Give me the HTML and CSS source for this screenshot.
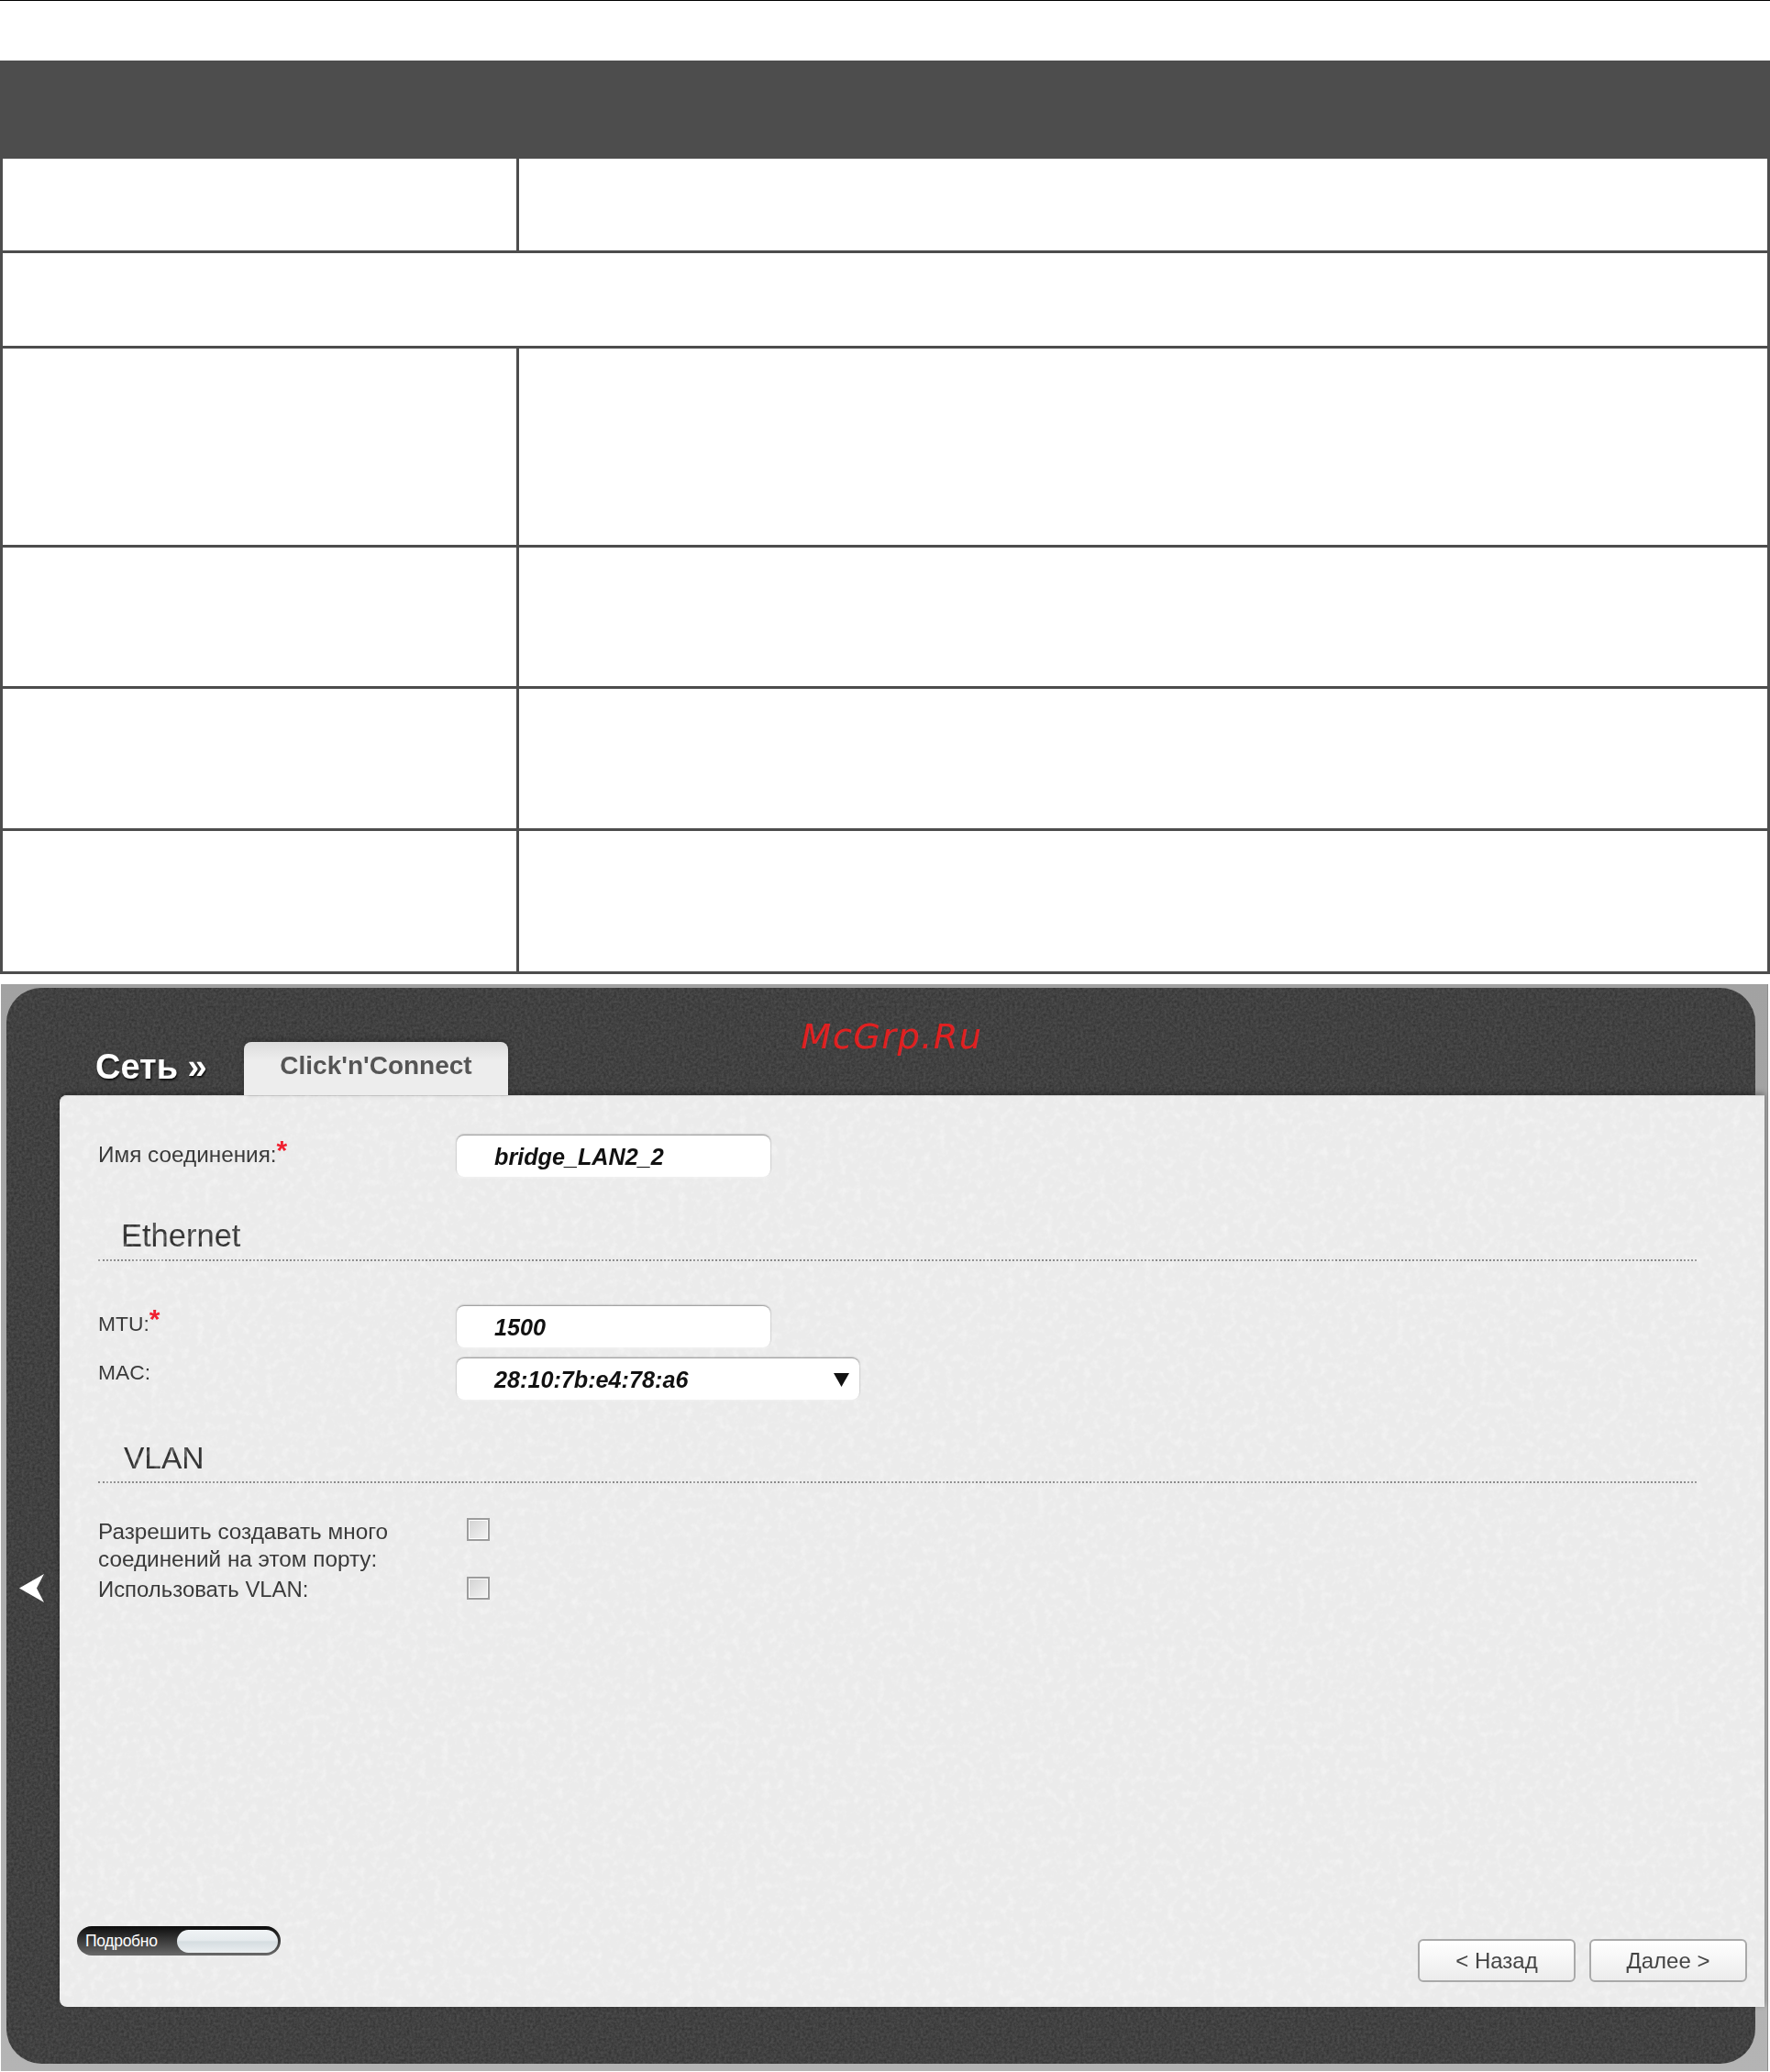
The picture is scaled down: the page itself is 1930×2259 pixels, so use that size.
FILE: index.html
```html
<!DOCTYPE html>
<html lang="ru">
<head>
<meta charset="utf-8">
<title>Click'n'Connect</title>
<link rel="stylesheet" href="styles.css">
</head>
<body>
<div class="topline"></div>
<div class="headband"></div>
<div class="grid">
  <div class="cell r1 c1"></div><div class="cell r1 c2"></div>
  <div class="cell r2 span"></div>
  <div class="cell r3 c1"></div><div class="cell r3 c2"></div>
  <div class="cell r4 c1"></div><div class="cell r4 c2"></div>
  <div class="cell r5 c1"></div><div class="cell r5 c2"></div>
  <div class="cell r6 c1"></div><div class="cell r6 c2"></div>
</div>
<div class="shot">
  <div class="frame">
    <svg class="noise" aria-hidden="true"><filter id="grain"><feTurbulence type="fractalNoise" baseFrequency="0.35" numOctaves="3" seed="4"/><feColorMatrix values="0 0 0 0 0  0 0 0 0 0  0 0 0 0 0  0.5 0 0 0 -0.12"/></filter><rect width="100%" height="100%" filter="url(#grain)"/></svg>
    <div class="brand">McGrp.Ru</div>
    <div class="tabs">
      <span class="crumb">Сеть »</span>
      <span class="tab">Click'n'Connect</span>
    </div>
    <div class="body">
      <button class="collapse" aria-label="Свернуть"><svg width="27" height="31" viewBox="0 0 27 31"><path class="chev" d="M0 15.500 27 0 19 15.500 27 31Z"/></svg></button>
      <div class="panel">
        <svg class="noise" aria-hidden="true"><filter id="paper"><feTurbulence type="fractalNoise" baseFrequency="0.12" numOctaves="3" seed="9"/><feColorMatrix values="0 0 0 0 1  0 0 0 0 1  0 0 0 0 1  0.9 0 0 0 -0.42"/></filter><rect width="100%" height="100%" filter="url(#paper)"/></svg>
        <div class="row first">
          <label class="lbl">Имя соединения:<sup class="req">*</sup></label>
          <div class="field w-text">bridge_LAN2_2</div>
        </div>
        <h2 class="sect eth">Ethernet</h2>
        <div class="row mtu">
          <label class="lbl latin">MTU:<sup class="req">*</sup></label>
          <div class="field w-text">1500</div>
        </div>
        <div class="row mac">
          <label class="lbl latin">MAC:</label>
          <div class="field w-select">28:10:7b:e4:78:a6<svg class="caret" width="17" height="15" viewBox="0 0 17 15"><path d="M0 0H17L8.500 15Z"/></svg></div>
        </div>
        <h2 class="sect vlan">VLAN</h2>
        <div class="row check one">
          <label class="lbl">Разрешить создавать много соединений на этом порту:</label>
          <span class="box"></span>
        </div>
        <div class="row check two">
          <label class="lbl">Использовать VLAN:</label>
          <span class="box"></span>
        </div>
        <div class="foot">
          <div class="toggle"><span class="toggle-text">Подробно</span><span class="knob"></span></div>
          <div class="btns"><button class="btn">&lt; Назад</button><button class="btn">Далее &gt;</button></div>
        </div>
      </div>
    </div>
  </div>
</div>
</body>
</html>
```

FILE: styles.css
```css
* { box-sizing: border-box; }
html, body { margin: 0; padding: 0; background: #fff; }
body { width: 1930px; height: 2259px; overflow: hidden; font-family: "Liberation Sans", Arial, sans-serif; }

.topline { height: 1px; background: #000; }
.headband { height: 107px; margin-top: 65px; background: #4d4d4d; }

.grid {
  display: grid;
  grid-template-columns: 566px 1364px;
  grid-template-rows: 103px 104px 217px 154px 155px 156px;
  height: 888px;
  background: #fff;
}
.cell { border-right: 3px solid #4d4d4d; border-bottom: 3px solid #4d4d4d; }
.c1 { border-left: 3px solid #4d4d4d; }
.span { grid-column: 1 / 3; border-left: 3px solid #4d4d4d; }

.shot {
  margin: 12px 2px 0 1px;
  height: 1185px;
  padding: 4px 13px 8px 6px;
  background: linear-gradient(#a2a2a2, #b4b4b4);
  border-right: 1px solid #8d8d8d;
  position: relative;
}
.frame {
  position: relative;
  height: 1173px;
  background: #4b4b4b;
  border-radius: 38px;
  filter: blur(0.55px);
  display: flex;
  flex-direction: column;
}
.noise { position: absolute; inset: 0; width: 100%; height: 100%; border-radius: inherit; pointer-events: none; }

.brand {
  position: absolute;
  left: 866px;
  top: 31px;
  font: italic 38px "DejaVu Sans", sans-serif;
  letter-spacing: 1.6px;
  color: #e02020;
  line-height: 44px;
}
.tabs {
  position: relative;
  z-index: 1;
  height: 117px;
  padding: 59px 0 0 97px;
  display: flex;
  align-items: flex-start;
}
.crumb {
  margin-top: 5px;
  width: 162px;
  font-weight: 700;
  font-size: 38px;
  line-height: 44px;
  color: #fff;
  text-shadow: 1px 2px 2px #111;
}
.tab {
  width: 288px;
  height: 58px;
  padding-top: 9px;
  text-align: center;
  font-weight: 700;
  font-size: 28px;
  line-height: 34px;
  color: #555;
  background: linear-gradient(#dcdcdc, #ededed 35%);
  border-radius: 8px 8px 0 0;
  box-shadow: 0 -2px 6px rgba(0,0,0,.25);
}

.body { position: relative; flex: 1; padding: 0 0 62px 58px; margin-right: -10px; }
.collapse {
  position: absolute;
  left: 14px;
  top: 522px;
  width: 27px;
  height: 31px;
  padding: 0;
  border: 0;
  background: none;
  display: block;
}
.chev { fill: #fff; }

.panel {
  position: relative;
  height: 994px;
  padding: 44px 0 0 42px;
  background: #ebebeb;
  border-radius: 8px 0 0 8px;
  box-shadow: 0 -2px 6px rgba(0,0,0,.35), inset 0 1px 0 #cfcfcf;
  color: #3a3a3a;
}
.row { position: relative; display: flex; align-items: flex-start; }
.lbl { width: 391px; font-size: 24.300px; line-height: 30px; color: #3a3a3a; flex: none; }
.latin { font-size: 22.800px; }
.req { color: #f02030; font-weight: 700; font-size: 30px; line-height: 0; vertical-align: 3px; }
.field {
  position: relative;
  height: 45px;
  padding-left: 41px;
  background: #fff;
  border-radius: 8px;
  box-shadow: 0 -1px 2px rgba(0,0,0,.42), 0 1px 2px rgba(255,255,255,.6);
  font-weight: 700;
  font-style: italic;
  font-size: 25.200px;
  line-height: 46px;
  color: #111;
}
.w-text { width: 342px; }
.w-select { width: 439px; }
.caret { position: absolute; right: 11px; top: 16px; }
.caret path { fill: #111; }

.sect {
  margin: 0 74px 0 0;
  border-bottom: 2px dotted #8a8a8a;
  font-weight: 400;
  font-size: 34.500px;
  line-height: 40px;
  color: #333;
}
.eth { margin-top: 44px; padding: 0 0 6px 25px; }
.mtu { margin-top: 49px; }
.mac { margin-top: 12px; }
.vlan { margin-top: 44px; padding: 0 0 5px 28px; font-size: 33.500px; }
.mtu .lbl { margin-top: 4px; }
.mac .lbl { margin-top: 0; }
.first .lbl { margin-top: 6px; }
.check { height: 30px; }
.check.one { margin-top: 38px; height: 64px; }
.check.one .lbl { width: 330px; margin-right: 72px; margin-top: 0; }
.check.two .lbl { margin-right: 72px; width: 330px; margin-top: -1px; font-size: 23.900px; }
.box {
  width: 25px;
  height: 25px;
  background: linear-gradient(135deg, #d2d2d2, #f4f4f4);
  border: 2px solid #9c9c9c;
  box-shadow: inset 0 0 0 1px #fff;
  flex: none;
}

.foot {
  position: absolute;
  left: 19px;
  right: 19px;
  bottom: 27px;
  display: flex;
  justify-content: space-between;
  align-items: flex-end;
}
.toggle {
  position: relative;
  width: 222px;
  height: 32px;
  margin-bottom: 29px;
  border-radius: 16px;
  background: linear-gradient(#0c0c0c, #6a6a6a);
  display: flex;
  align-items: center;
  padding-left: 9px;
}
.toggle-text { font-size: 17.500px; color: #fff; letter-spacing: -.3px; }
.knob {
  position: absolute;
  right: 3px;
  top: 4px;
  width: 110px;
  height: 25px;
  border-radius: 13px;
  background: linear-gradient(#f0f3f5 0, #e6ebee 45%, #d5dde1 52%, #eaeef0 100%);
}
.btns { display: flex; gap: 15px; }
.btn {
  width: 172px;
  height: 47px;
  padding: 0;
  border: 2px solid #a9a9a9;
  border-radius: 6px;
  background: linear-gradient(#fff, #ececec);
  font-family: "Liberation Sans", Arial, sans-serif;
  font-size: 24px;
  color: #444;
}
```
